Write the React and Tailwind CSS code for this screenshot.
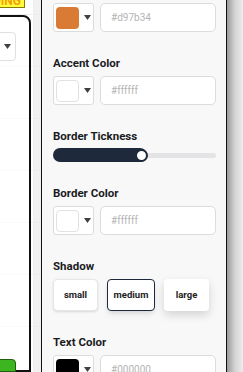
const font = { fontFamily: 'Roboto, "Liberation Sans", sans-serif' }

function Caret() {
  return (
    <svg width="7" height="5" viewBox="0 0 7 5" className="shrink-0">
      <path d="M0 0h7L3.5 5z" fill="#3f3f46" />
    </svg>
  )
}

function ColorPicker({ color, value, light }) {
  return (
    <div className="flex h-[29px] gap-[6px]">
      <div className="flex w-[41px] items-center gap-[5px] rounded-[3px] border border-[#dcdcdc] bg-white pl-[2px]">
        <div
          className={`h-[22px] w-[23px] rounded-[4px] ${light ? 'border border-[#e2e2e2]' : ''}`}
          style={{ backgroundColor: color }}
        />
        <Caret />
      </div>
      <div className="flex flex-1 items-center rounded-[5px] border border-[#dcdcdc] bg-white pl-[10px] text-[10px] text-[#b4b4b4]">
        {value}
      </div>
    </div>
  )
}

function Section({ label, children, gap = 'gap-[5px]' }) {
  return (
    <div className={`flex flex-col ${gap}`}>
      <p className="h-[16px] text-[11.5px] font-bold leading-[16px] text-[#1b1b1f]">{label}</p>
      {children}
    </div>
  )
}

export default function App() {
  return (
    <div className="flex h-[372px] w-[243px] overflow-hidden bg-white" style={font}>
      {/* canvas strip */}
      <div className="relative w-[41px] shrink-0 overflow-hidden bg-white bg-[linear-gradient(to_right,#efefef_1px,transparent_1px),linear-gradient(to_bottom,#efefef_1px,transparent_1px)] bg-[size:52px_52px] bg-[position:33px_14px]">
        <div className="flex h-full flex-col">
          <div className="-ml-[55px] flex h-[8px] w-[80px] items-end justify-end overflow-hidden border-r border-b border-[#8a7a00] bg-[#ffff3d] pr-[3px]">
            <span className="text-[12px] leading-[11px] font-bold text-[#f59e0b]">PENDING</span>
          </div>
          <div className="-ml-[20px] mt-[7px] flex w-[51px] flex-1 flex-col justify-between rounded-tr-[8px] border-2 border-[#111] bg-white/70 pt-[15px]">
            <div className="flex h-[29px] w-[34px] items-center justify-end rounded-[4px] border border-[#e0e0e0] bg-white pr-[4px]">
              <Caret />
            </div>
            <div className="-mb-[2px] h-[13px] w-[34px] rounded-tr-[4px] border border-[#1f5f10] bg-[#3cb521]" />
          </div>
        </div>
        <div className="absolute top-0 right-0 h-full w-[7px] bg-[#ededed]/80" />
      </div>

      {/* settings panel */}
      <div className="w-[186px] shrink-0 border-x border-x-[#111] bg-[#f8f8f8] px-[10px] pl-[11px]">
        <div className="-mt-[18px] flex flex-col gap-[23px]">
          <Section label="Primary Color">
            <ColorPicker color="#d97b34" value="#d97b34" />
          </Section>
          <Section label="Accent Color">
            <ColorPicker color="#ffffff" value="#ffffff" light />
          </Section>
          <Section label="Border Tickness" gap="gap-[4px]">
            <div className="relative flex h-[14px] items-center">
              <div className="h-[5px] w-full rounded-full bg-[#e4e4e7]" />
              <div className="absolute top-0 left-0 h-[14px] w-[94px] rounded-full bg-[#1e293b]" />
              <div className="absolute top-[1px] left-[82px] h-[13px] w-[13px] rounded-full border-2 border-[#1e293b] bg-white" />
            </div>
          </Section>
          <Section label="Border Color">
            <ColorPicker color="#ffffff" value="#ffffff" light />
          </Section>
          <Section label="Shadow">
            <div className="flex h-[32px] gap-[9px] text-[9.5px] font-bold text-[#222]">
              <button className="w-[45px] rounded-[4px] border border-[#e6e6e6] bg-white shadow-sm">small</button>
              <button className="w-[48px] rounded-[4px] border-[1.5px] border-[#1e293b] bg-white shadow-md">medium</button>
              <button className="w-[45px] rounded-[4px] bg-white shadow-[0_4px_10px_rgba(0,0,0,0.15)]">large</button>
            </div>
          </Section>
          <Section label="Text Color">
            <ColorPicker color="#000000" value="#000000" />
          </Section>
        </div>
      </div>

      {/* backdrop shade */}
      <div className="flex-1 bg-gradient-to-r from-[#9c9c9c] via-[#d4d4d4] to-[#ececec]" />
    </div>
  )
}
